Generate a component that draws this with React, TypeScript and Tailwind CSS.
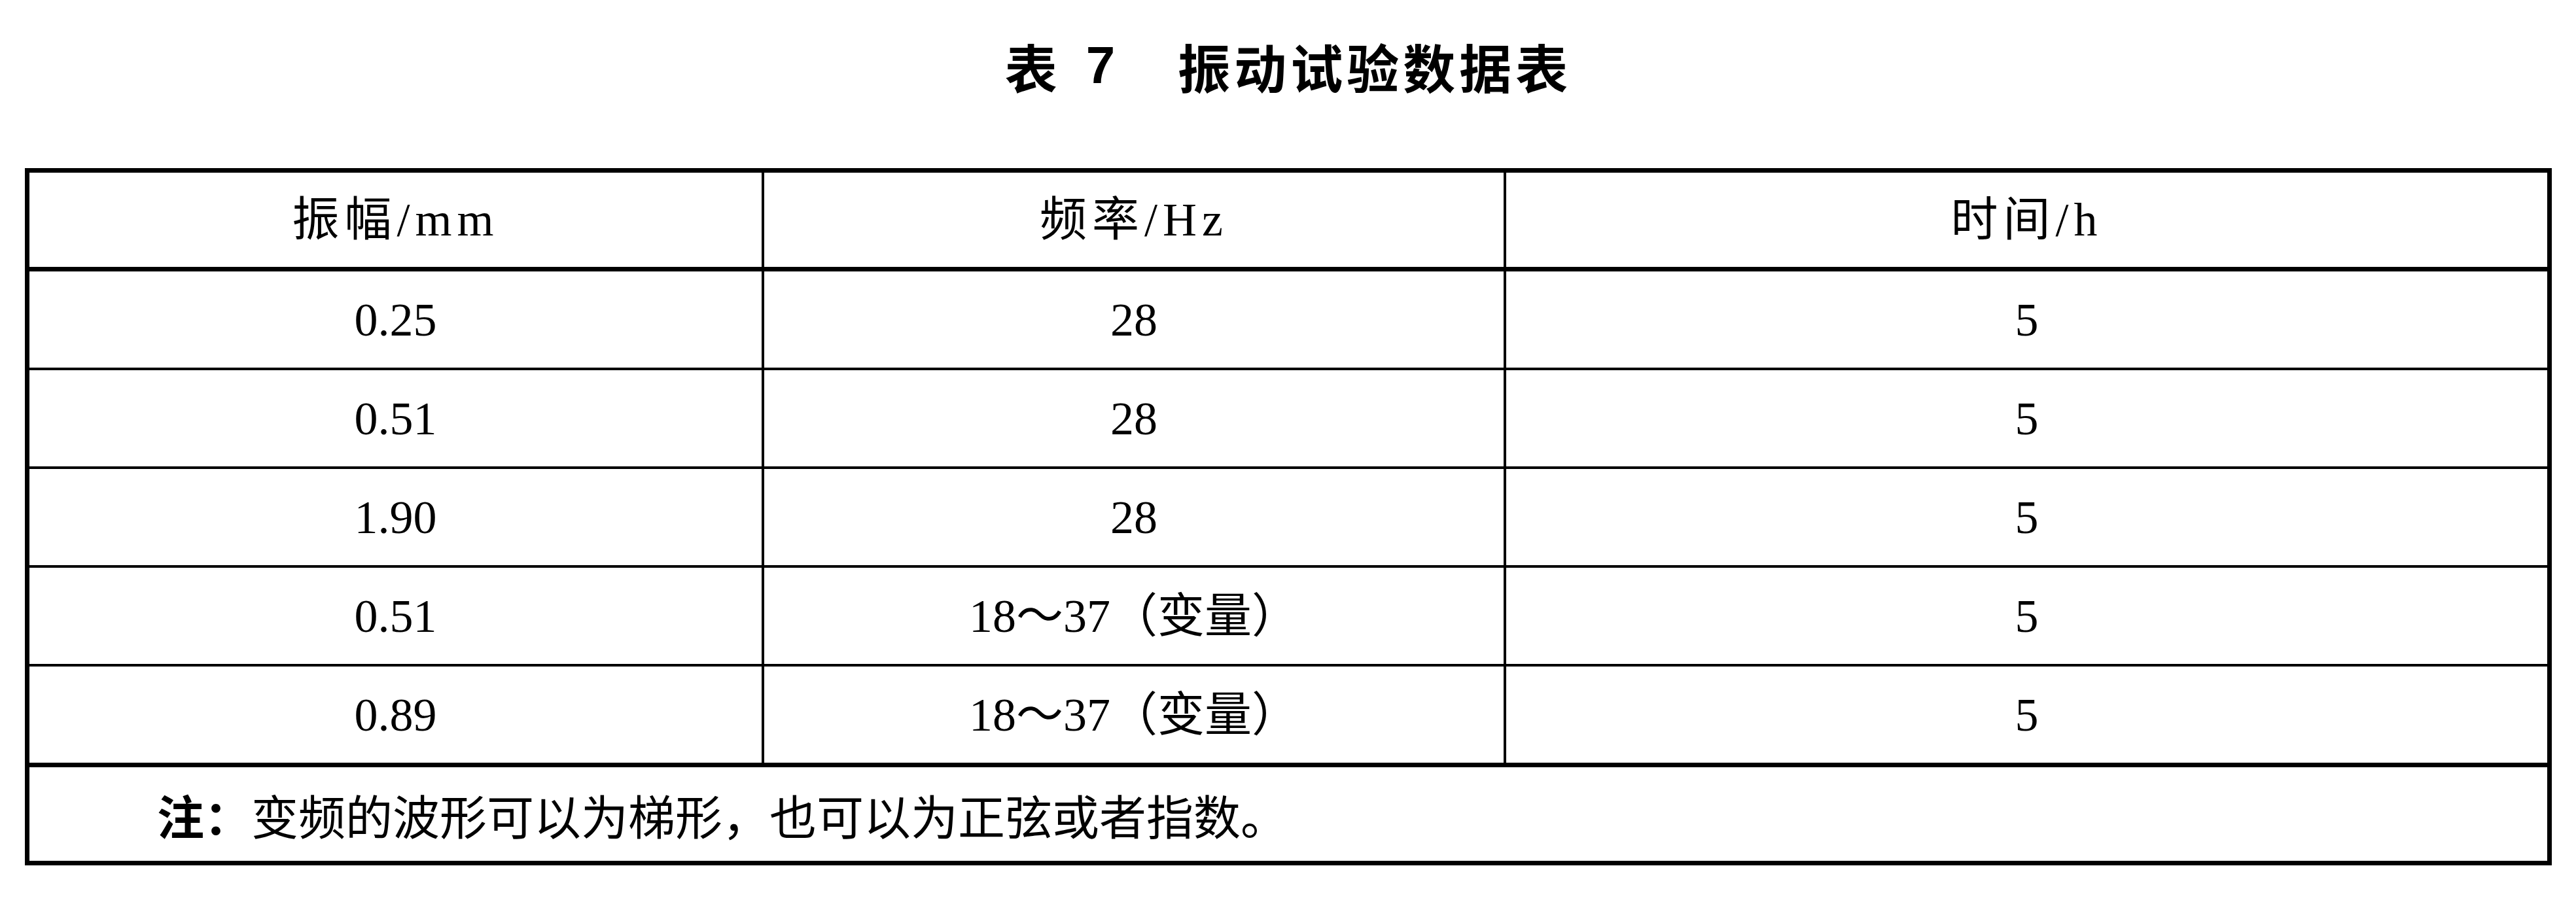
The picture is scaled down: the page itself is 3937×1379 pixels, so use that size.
import React from 'react';

const rows = [
  { amp: '0.25', freq: '28', time: '5' },
  { amp: '0.51', freq: '28', time: '5' },
  { amp: '1.90', freq: '28', time: '5' },
  { amp: '0.51', freq: '18～37（变量）', time: '5' },
  { amp: '0.89', freq: '18～37（变量）', time: '5' },
];

const serif = "font-['Liberation_Serif','Noto_Sans_CJK_SC',serif]";

const Cell: React.FC<{ children: React.ReactNode; className?: string }> = ({ children, className = '' }) => (
  <div className={`flex items-center justify-center ${className}`}>{children}</div>
);

export default function App() {
  return (
    <div className={`w-full min-h-[1379px] bg-white text-black pl-[38px] pr-[37px] pt-[60px] ${serif}`}>
      {/* caption */}
      <div className="flex items-center justify-center h-[80px] font-['Noto_Sans_CJK_SC',sans-serif] font-bold text-[80px] leading-none">
        <span>表</span>
        <span className="ml-[44px] font-['Liberation_Sans','Noto_Sans_CJK_SC',sans-serif]">7</span>
        <span className="ml-[96px] tracking-[6px]">振动试验数据表</span>
      </div>

      <div className="mt-[117px] border-[7px] border-black text-[72px] leading-none">
        {/* header */}
        <div className="flex h-[151px] border-b-[7px] border-black tracking-[8px]">
          <Cell className="w-[1123px] border-r-4 border-black">振幅/mm</Cell>
          <Cell className="w-[1134px] border-r-4 border-black">频率/Hz</Cell>
          <Cell className="flex-1">时间/h</Cell>
        </div>

        {rows.map((r, i) => (
          <div
            key={i}
            className={`flex ${i === rows.length - 1 ? 'h-[154px] border-b-[7px]' : 'h-[151px] border-b-4'} border-black`}
          >
            <Cell className="w-[1123px] border-r-4 border-black">{r.amp}</Cell>
            <Cell className="w-[1134px] border-r-4 border-black">{r.freq}</Cell>
            <Cell className="flex-1">{r.time}</Cell>
          </div>
        ))}

        {/* note */}
        <div className="flex items-center h-[143px] pl-[195px] text-[72px] font-['Noto_Sans_CJK_SC',sans-serif]">
          <span className="font-bold">注：</span>
          <span>变频的波形可以为梯形，也可以为正弦或者指数。</span>
        </div>
      </div>
    </div>
  );
}
